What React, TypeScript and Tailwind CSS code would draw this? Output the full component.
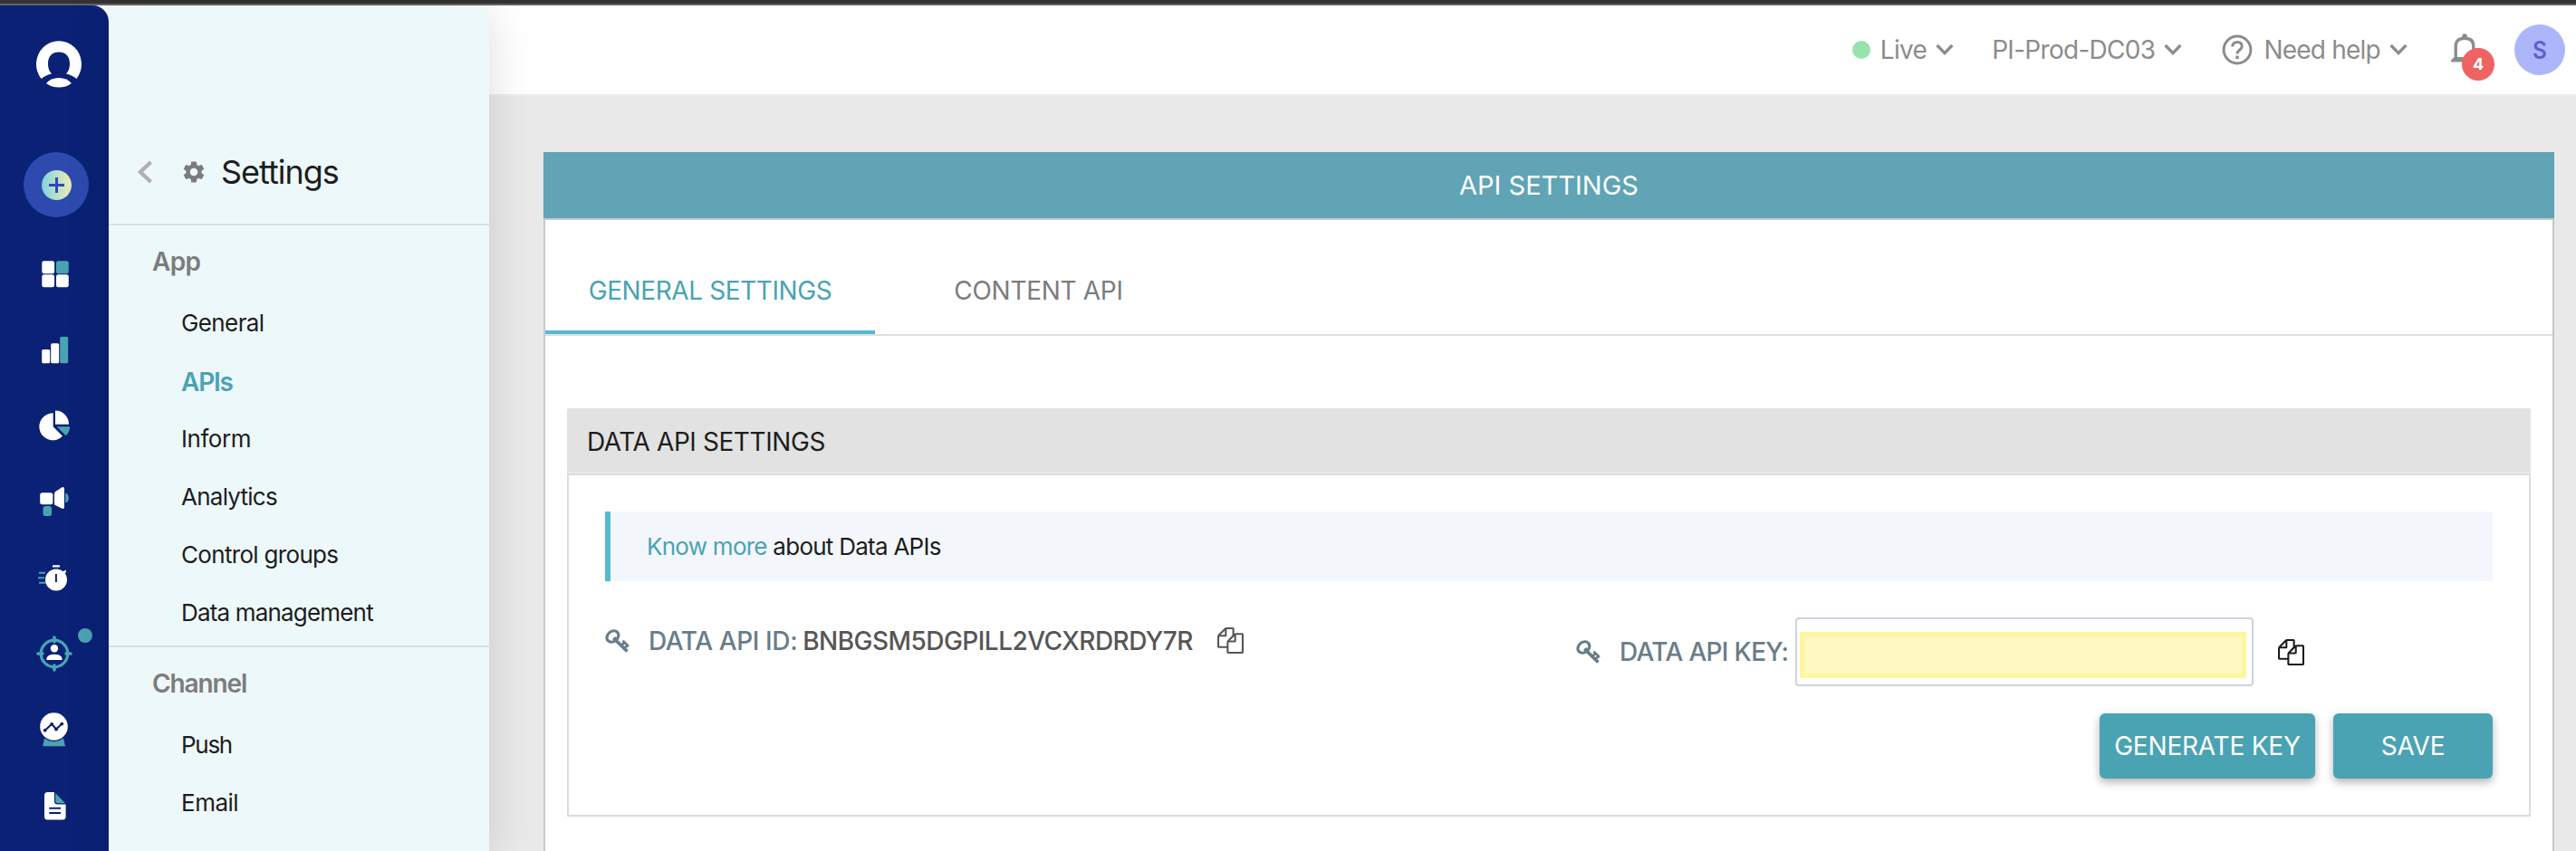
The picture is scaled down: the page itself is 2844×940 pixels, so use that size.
import type { ReactNode } from "react";

const navy = "#0a2176";
const teal = "#4aa3b3";

function RailIcon({ children }: { children: ReactNode }) {
  return (
    <a className="flex h-[84px] w-full shrink-0 items-center justify-center">
      <svg className="h-[44px] w-[40px] overflow-visible" viewBox="0 0 40 44" fill="#fff">
        {children}
      </svg>
    </a>
  );
}

function Rail() {
  return (
    <nav className="relative flex h-full w-[120px] shrink-0 flex-col items-center overflow-hidden rounded-tr-[18px] bg-[#0a2176]">
      <div className="flex h-[130px] w-full shrink-0 items-center justify-center pl-[10px]">
        <svg className="h-[52px] w-[50px]" viewBox="40 45.5 50 52" fill="#fff">
          <path d="M45.5 87.5A25 25.7 0 1 1 84.5 87.5Q79 83 73 82C76 79 77 75 77 71C77 62 72 58 65 58C58 58 53 62 53 71C53 75 54 79 57 82Q51 83 45.5 87.5Z" />
          <path d="M51 92.5Q56 86.5 65 86.5Q74 86.5 79 92.5Q73 97 65 97Q57 97 51 92.5Z" />
        </svg>
      </div>
      <div className="flex h-[125px] w-full shrink-0 justify-center pt-[32px] pl-[4px]">
        <div className="flex size-[72px] items-center justify-center rounded-full bg-[#2e4aae]">
          <div className="flex size-[33px] items-center justify-center rounded-full bg-linear-to-r from-[#7fd3dc] to-[#ecebb5]">
            <svg className="size-[17px]" viewBox="0 0 17 17" stroke="#2e4aae" strokeWidth="3">
              <path d="M8.5 0V17M0 8.5H17" />
            </svg>
          </div>
        </div>
      </div>
      <RailIcon>
        <rect x="6.3" y="7.3" width="13.8" height="14" rx="2.2" />
        <rect x="22" y="7.3" width="13.8" height="14" rx="2.2" fill={teal} />
        <rect x="6.3" y="22.2" width="13.8" height="14" rx="2.2" />
        <rect x="22" y="22.2" width="13.8" height="14" rx="2.2" />
      </RailIcon>
      <RailIcon>
        <rect x="6.2" y="21" width="9" height="15.2" rx="1.5" />
        <rect x="16.2" y="14.3" width="9" height="21.9" rx="1.5" />
        <rect x="26.2" y="7" width="9" height="29.2" rx="1.5" fill={teal} />
      </RailIcon>
      <RailIcon>
        <path d="M18.7 7.3A15 15 0 1 0 29 32.8L18.7 22.3Z" />
        <path d="M21 4.5A15 15 0 0 1 36 19.8H21Z" />
        <path d="M22.7 22.2H37.2Q37 28 32.7 32.3Z" fill={teal} />
      </RailIcon>
      <RailIcon>
        <rect x="4.2" y="11.3" width="14.2" height="13" rx="2.5" />
        <path d="M20 12.5Q20 10.8 21.5 9.8L28.5 5.2Q31 4.4 31 7V27Q31 29.6 28.5 28.8L20 24.5Z" />
        <path d="M32.2 11.5Q35.8 12.5 35.8 17Q35.8 21.5 32.2 22.5Z" fill={teal} />
        <rect x="7.6" y="26" width="9.4" height="11" rx="2.5" fill={teal} />
      </RailIcon>
      <RailIcon>
        <circle cx="22" cy="23.5" r="12" />
        <path d="M18 7.2H26V9.6H18ZM29 14.5L32.8 12.6V15.6L31 17Z" />
        <path d="M21.9 17V26" stroke={navy} strokeWidth="2" />
        <path d="M3 15.8H10M2 21.3H9M3 26.8H10.2" stroke={teal} strokeWidth="2" />
      </RailIcon>
      <RailIcon>
        <circle cx="20" cy="21" r="14.8" fill="none" stroke={teal} strokeWidth="3.2" />
        <path d="M20 3V8M20 34V39M2 21H7M33 21H38" stroke={teal} strokeWidth="3.6" strokeLinecap="round" />
        <circle cx="20" cy="15.2" r="4.2" />
        <path d="M11.4 28V26.5Q12 21.7 20 21.7Q28 21.7 28.6 26.5V28Z" />
      </RailIcon>
      <RailIcon>
        <circle cx="19.5" cy="17.5" r="15.3" />
        <path d="M9 30.6Q19.5 38 30 30.6L32 39.3H7.2Z" fill={teal} />
        <path d="M9.7 21.7L17.2 14.8L22 20.5L28.3 14.6" fill="none" stroke={navy} strokeWidth="2" />
        <g fill={navy}>
          <circle cx="9.7" cy="21.7" r="1.9" />
          <circle cx="17.2" cy="14.8" r="1.9" />
          <circle cx="22" cy="20.5" r="1.9" />
          <circle cx="28.3" cy="14.6" r="1.9" />
        </g>
      </RailIcon>
      <RailIcon>
        <path d="M12.5 6H20V16Q20 19.5 23.5 19.5H32.6V33Q32.6 36.6 29 36.6H12.5Q9 36.6 9 33V9.5Q9 6 12.5 6Z" />
        <path d="M21.2 7L32 18.3H24Q21.2 18.3 21.2 15.5Z" fill={teal} />
        <path d="M14.3 23.7H27M14.3 29H27" stroke={navy} strokeWidth="2" />
      </RailIcon>
      <span className="absolute top-[688px] left-[86px] size-4 rounded-full bg-[#4aa3b3]" />
    </nav>
  );
}

function MenuItem({ className, children }: { className: string; children: ReactNode }) {
  return (
    <li className="flex h-16 items-center pl-[80px] text-[26px] text-[#1d1d1d]">
      <span className={className}>{children}</span>
    </li>
  );
}

function SettingsPanel() {
  return (
    <aside className="z-10 h-full w-[420px] shrink-0 rounded-tr-[20px] bg-[#edf8fb] shadow-[0_6px_50px_rgba(0,0,0,0.14)]">
      <div className="flex h-[243px] items-center border-b-2 border-[#d6dfea] pt-[126px] pl-[31px]">
        <svg className="h-[26px] w-[18px]" viewBox="0 0 18 26" fill="none" stroke="#b0b0b0" strokeWidth="4.4">
          <path d="M15.5 2L4 13L15.5 24" />
        </svg>
        <svg className="ml-[33px] size-[24px]" viewBox="2.3 2 19.4 20" fill="#7c7c7c">
          <path d="M19.14 12.94c.04-.3.06-.61.06-.94 0-.32-.02-.64-.07-.94l2.03-1.58a.49.49 0 0 0 .12-.61l-1.92-3.32a.488.488 0 0 0-.59-.22l-2.39.96c-.5-.38-1.03-.7-1.62-.94l-.36-2.54a.484.484 0 0 0-.48-.41h-3.84c-.24 0-.43.17-.47.41l-.36 2.54c-.59.24-1.13.57-1.62.94l-2.39-.96c-.22-.08-.47 0-.59.22L2.74 8.87c-.12.21-.08.47.12.61l2.03 1.58c-.05.3-.09.63-.09.94s.02.64.07.94l-2.03 1.58a.49.49 0 0 0-.12.61l1.92 3.32c.12.22.37.29.59.22l2.39-.96c.5.38 1.03.7 1.62.94l.36 2.54c.05.24.24.41.48.41h3.84c.24 0 .44-.17.47-.41l.36-2.54c.59-.24 1.13-.56 1.62-.94l2.39.96c.22.08.47 0 .59-.22l1.92-3.32c.12-.22.07-.47-.12-.61l-2.01-1.58zM12 15.6c-1.98 0-3.6-1.62-3.6-3.6s1.62-3.6 3.6-3.6 3.6 1.62 3.6 3.6-1.62 3.6-3.6 3.6z" />
        </svg>
        <h1 className="ml-[18px] text-[36px] tracking-[-1px] text-[#1d1d1d]">Settings</h1>
      </div>
      <h2 className="flex h-[76px] items-center pt-[3px] pl-[48px] text-[28px] font-semibold tracking-[-0.7px] text-[#7c7c7c]">App</h2>
      <ul className="border-b-2 border-[#d6dfea] pb-[4px]">
        <MenuItem className="tracking-[-0.6px]">General</MenuItem>
        <MenuItem className="pt-px text-[28px] font-semibold tracking-[-1.2px] text-[#4aa3b3]">APIs</MenuItem>
        <MenuItem className="tracking-[-0.45px]">Inform</MenuItem>
        <MenuItem className="tracking-[-0.75px]">Analytics</MenuItem>
        <MenuItem className="tracking-[-0.68px]">Control groups</MenuItem>
        <MenuItem className="tracking-[-0.82px]">Data management</MenuItem>
      </ul>
      <h2 className="flex h-[76px] items-center pt-[3px] pl-[48px] text-[28px] font-semibold tracking-[-1.1px] text-[#7c7c7c]">Channel</h2>
      <ul>
        <MenuItem className="tracking-[-1.3px]">Push</MenuItem>
        <MenuItem className="tracking-[-0.5px]">Email</MenuItem>
      </ul>
    </aside>
  );
}

function Chevron() {
  return (
    <svg className="ml-[10px] h-[14px] w-[20px]" viewBox="0 0 20 14" fill="none" stroke="#8c8c8c" strokeWidth="3.3">
      <path d="M1.6 2L10 10.6L18.4 2" />
    </svg>
  );
}

function KeyIcon() {
  return (
    <svg className="h-[26px] w-[27px]" viewBox="0 0 27 26" fill="none" stroke="#687d8a">
      <ellipse cx="8.4" cy="8" rx="7" ry="5.6" strokeWidth="3.2" transform="rotate(-42 8.4 8)" />
      <path d="M8 11L11 8L14 11L11.5 14Z" fill="#687d8a" stroke="none" />
      <path d="M10.5 11L24.5 24.5" strokeWidth="3.8" />
      <path d="M17.5 18.5L21.5 14.5M21.5 21L25.5 17M19.5 12.8L26 19" strokeWidth="2.7" />
    </svg>
  );
}

function CopyIcon({ className }: { className: string }) {
  return (
    <svg className={className} viewBox="0 0 1792 1792" fill="currentColor">
      <path d="M1696 384q40 0 68 28t28 68v1216q0 40-28 68t-68 28h-960q-40 0-68-28t-28-68v-288h-544q-40 0-68-28t-28-68v-672q0-40 20-88t48-76l408-408q28-28 76-48t88-20h416q40 0 68 28t28 68v328q68-40 128-40h416zm-544 213l-299 299h299v-299zm-640-384l-299 299h299v-299zm196 647l316-316v-416h-384v416q0 40-28 68t-68 28h-416v640h512v-256q0-40 20-88t48-76zm956 804v-1152h-384v416q0 40-28 68t-68 28h-416v640h896z" />
    </svg>
  );
}

function TopBar() {
  return (
    <header className="flex h-[100px] w-full shrink-0 items-center justify-end border-b-2 border-[#ededed] bg-white pr-[12px] text-[28px] text-[#8c8c8c]">
      <span className="size-5 rounded-full bg-[#96e4ab]" />
      <span className="ml-[11px] tracking-[-0.7px]">Live</span>
      <Chevron />
      <span className="ml-[42px] tracking-[-0.7px]">PI-Prod-DC03</span>
      <Chevron />
      <svg className="ml-[44px] size-[34px]" viewBox="0 0 34 34" fill="none" stroke="#8c8c8c" strokeWidth="3">
        <circle cx="17" cy="17" r="14.9" />
        <path d="M11.8 13.5Q11.8 8.4 17 8.4Q22.2 8.4 22.2 13Q22.2 15.3 19.6 17.3Q17 19.2 17 21.5" />
        <path d="M15.2 23.6H18.8V27H15.2Z" fill="#8c8c8c" stroke="none" />
      </svg>
      <span className="ml-[12px] tracking-[-0.78px]">Need help</span>
      <Chevron />
      <div className="relative ml-[48px] h-[36px] w-[50px]">
        <svg className="h-[34px] w-[30px]" viewBox="0 0 30 34" fill="none" stroke="#8c8c8c" strokeWidth="3.4">
          <path d="M5.2 29V14Q5.2 5.3 15 5.3Q24.8 5.3 24.8 14V29" />
          <path d="M0 31.5V29.5L3.6 26H26.4L30 29.5V31.5Z" fill="#8c8c8c" stroke="none" />
          <circle cx="15" cy="3" r="2.8" fill="#8c8c8c" stroke="none" />
        </svg>
        <span className="absolute top-[16px] left-[12px] flex size-9 items-center justify-center rounded-full bg-[#ee6463] text-[18px] font-bold text-white">4</span>
      </div>
      <span className="ml-[20px] flex size-[56px] items-center justify-center rounded-full bg-[#aeb6fb] text-[27px] font-semibold text-[#6060cf]"><span className="scale-x-90">S</span></span>
    </header>
  );
}

function DataApiSettings() {
  return (
    <section className="mx-[24px] mt-[80px] flex h-[451px] flex-col">
      <h3 className="flex h-[72px] shrink-0 items-center rounded-t-[2px] border-b-2 border-[#e6ebe9] bg-[#e2e2e2] pt-[4px] pl-[22px] text-[28px] tracking-[-0.42px] text-[#1d1d1d]">
        DATA API SETTINGS
      </h3>
      <div className="flex grow flex-col border-2 border-[#dcdcdc] px-10 pt-[40px]">
        <p className="flex h-[77px] items-center border-l-[6px] border-[#55b9cf] bg-[#f3f7fb] pl-[40px] text-[26px] tracking-[-0.74px] text-[#1d1d1d]">
          <span><a className="text-[#4aa3b3]">Know more</a> about Data APIs</span>
        </p>
        <div className="mt-[40px] flex h-[76px] items-start text-[28px] font-medium text-[#687d8a]">
          <div className="flex h-[51px] w-[1072px] shrink-0 items-center">
            <KeyIcon />
            <span className="ml-[21px] tracking-[-0.4px]">DATA API ID:</span>
            <span className="ml-[6px] tracking-[-0.54px] text-[#565656]">BNBGSM5DGPILL2VCXRDRDY7R</span>
            <CopyIcon className="ml-[27px] size-[29px] text-[#555]" />
          </div>
          <div className="flex h-[76px] items-center">
            <KeyIcon />
            <span className="ml-[21px] tracking-[-0.68px]">DATA API KEY:</span>
            <div className="ml-[8px] flex h-[76px] w-[506px] items-center rounded-[4px] border-2 border-[#cbd5de] pt-[7px] pl-[3px]">
              <div className="h-[51px] w-[493px] border-[5px] border-[#fff7a0] bg-[#fdf9c0]" />
            </div>
            <CopyIcon className="ml-[27px] size-[29px] text-[#1a1a1a]" />
          </div>
        </div>
        <div className="mt-[30px] flex justify-end gap-[20px] text-[28px] text-white">
          <button className="h-[72px] w-[238px] rounded-[6px] bg-[#4aa3b3] tracking-[-0.2px] shadow-[0_4px_10px_rgba(0,0,0,0.3)]">GENERATE KEY</button>
          <button className="h-[72px] w-[176px] rounded-[6px] bg-[#4aa3b3] tracking-[-0.2px] shadow-[0_4px_10px_rgba(0,0,0,0.3)]">SAVE</button>
        </div>
      </div>
    </section>
  );
}

export default function App() {
  return (
    <div className="flex h-[940px] w-[2844px] flex-col overflow-hidden bg-[#e9e9e9] font-['Inter',sans-serif] leading-none">
      <div className="h-[6px] w-full shrink-0 border-b-2 border-[#666366] bg-[#333]" />
      <div className="flex min-h-0 grow bg-linear-to-b from-white from-[98px] to-[#e9e9e9] to-[98px]">
        <Rail />
        <SettingsPanel />
        <main className="flex min-w-0 grow flex-col bg-[#e9e9e9]">
          <TopBar />
          <div className="mt-[62px] mr-[24px] ml-[60px] flex grow flex-col">
            <h2 className="flex h-[73px] shrink-0 items-center justify-center bg-[#60a4b5] text-[29px] text-white">API SETTINGS</h2>
            <div className="grow border-2 border-b-0 border-[#c8c8c8] bg-white">
              <div className="flex h-[128px] border-b-2 border-[#dfdfdf] text-[28px] text-[#7c7c7c]">
                <div className="flex w-[364px] items-center justify-center border-b-4 border-[#55b9cf] pt-[34px] tracking-[-0.4px] text-[#4aa3b3]">GENERAL SETTINGS</div>
                <div className="flex w-[361px] items-center justify-center pt-[34px] pb-[4px] tracking-[-0.3px]">CONTENT API</div>
              </div>
              <DataApiSettings />
            </div>
          </div>
        </main>
      </div>
    </div>
  );
}
